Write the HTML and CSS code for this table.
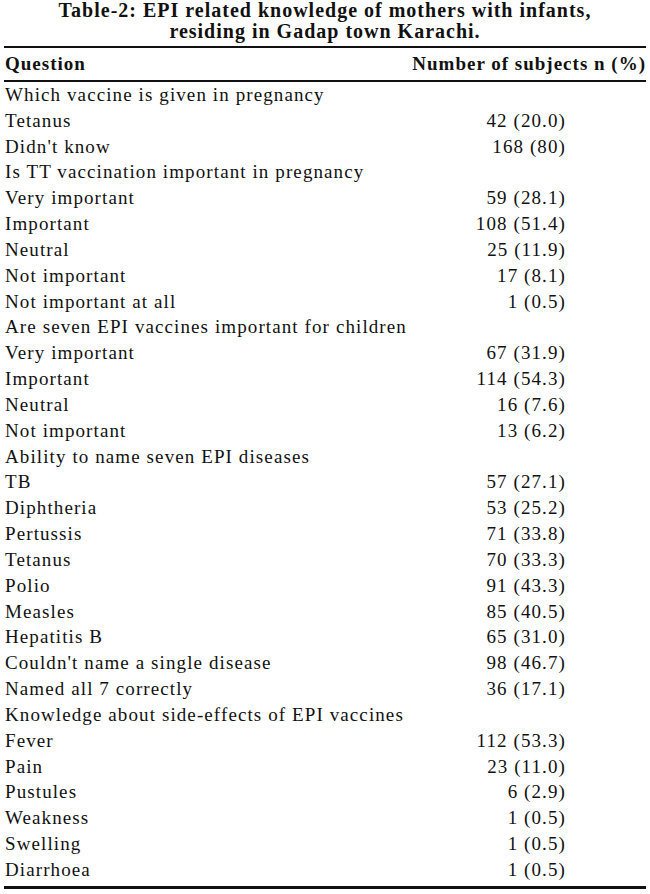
FILE: index.html
```html
<!DOCTYPE html>
<html>
<head>
<meta charset="utf-8">
<link rel="stylesheet" href="styles.css">
</head>
<body>
<div class="page">
  <h1 class="title">Table-2: EPI related knowledge of mothers with infants,<br>residing in Gadap town Karachi.</h1>
  <table class="data">
    <thead>
      <tr><th class="q">Question</th><th class="n">Number of subjects n (%)</th></tr>
    </thead>
    <tbody>
      <tr class="first"><td class="q">Which vaccine is given in pregnancy</td><td class="n"></td></tr>
      <tr><td class="q">Tetanus</td><td class="n">42 (20.0)</td></tr>
      <tr><td class="q">Didn't know</td><td class="n">168 (80)</td></tr>
      <tr><td class="q">Is TT vaccination important in pregnancy</td><td class="n"></td></tr>
      <tr><td class="q">Very important</td><td class="n">59 (28.1)</td></tr>
      <tr><td class="q">Important</td><td class="n">108 (51.4)</td></tr>
      <tr><td class="q">Neutral</td><td class="n">25 (11.9)</td></tr>
      <tr><td class="q">Not important</td><td class="n">17 (8.1)</td></tr>
      <tr><td class="q">Not important at all</td><td class="n">1 (0.5)</td></tr>
      <tr><td class="q">Are seven EPI vaccines important for children</td><td class="n"></td></tr>
      <tr><td class="q">Very important</td><td class="n">67 (31.9)</td></tr>
      <tr><td class="q">Important</td><td class="n">114 (54.3)</td></tr>
      <tr><td class="q">Neutral</td><td class="n">16 (7.6)</td></tr>
      <tr><td class="q">Not important</td><td class="n">13 (6.2)</td></tr>
      <tr><td class="q">Ability to name seven EPI diseases</td><td class="n"></td></tr>
      <tr><td class="q">TB</td><td class="n">57 (27.1)</td></tr>
      <tr><td class="q">Diphtheria</td><td class="n">53 (25.2)</td></tr>
      <tr><td class="q">Pertussis</td><td class="n">71 (33.8)</td></tr>
      <tr><td class="q">Tetanus</td><td class="n">70 (33.3)</td></tr>
      <tr><td class="q">Polio</td><td class="n">91 (43.3)</td></tr>
      <tr><td class="q">Measles</td><td class="n">85 (40.5)</td></tr>
      <tr><td class="q">Hepatitis B</td><td class="n">65 (31.0)</td></tr>
      <tr><td class="q">Couldn't name a single disease</td><td class="n">98 (46.7)</td></tr>
      <tr><td class="q">Named all 7 correctly</td><td class="n">36 (17.1)</td></tr>
      <tr><td class="q">Knowledge about side-effects of EPI vaccines</td><td class="n"></td></tr>
      <tr><td class="q">Fever</td><td class="n">112 (53.3)</td></tr>
      <tr><td class="q">Pain</td><td class="n">23 (11.0)</td></tr>
      <tr><td class="q">Pustules</td><td class="n">6 (2.9)</td></tr>
      <tr><td class="q">Weakness</td><td class="n">1 (0.5)</td></tr>
      <tr><td class="q">Swelling</td><td class="n">1 (0.5)</td></tr>
      <tr class="last"><td class="q">Diarrhoea</td><td class="n">1 (0.5)</td></tr>
    </tbody>
  </table>
</div>
</body>
</html>
```

FILE: styles.css
```css
html, body {
  margin: 0;
  padding: 0;
  background: #ffffff;
}
body {
  font-family: "Liberation Serif", "Times New Roman", serif;
  color: #111111;
}
.page {
  width: 642px;
  margin-left: 4px;
}
.title {
  margin: 0;
  padding: 0;
  font-size: 20px;
  font-weight: bold;
  line-height: 21px;
  text-align: center;
  letter-spacing: 1px;
  height: 46px;
}
.data {
  width: 642px;
  border-collapse: collapse;
  font-size: 19px;
  letter-spacing: 1.1px;
  border-bottom: 3px solid #111111;
}
.data thead tr {
  border-top: 2px solid #111111;
  border-bottom: 2px solid #111111;
}
.data th {
  font-weight: bold;
  height: 32px;
  padding: 0;
  vertical-align: middle;
  line-height: 22px;
  letter-spacing: 1px;
}
.data td {
  padding: 0;
  height: 25.83px;
  line-height: 25.83px;
  white-space: nowrap;
}
.data .q {
  text-align: left;
  padding-left: 1px;
}
.data th.n {
  text-align: right;
  padding-right: 0;
}
.data td.n {
  text-align: right;
  padding-right: 80px;
}
.data tr.last td {
  padding-bottom: 3px;
}
```
